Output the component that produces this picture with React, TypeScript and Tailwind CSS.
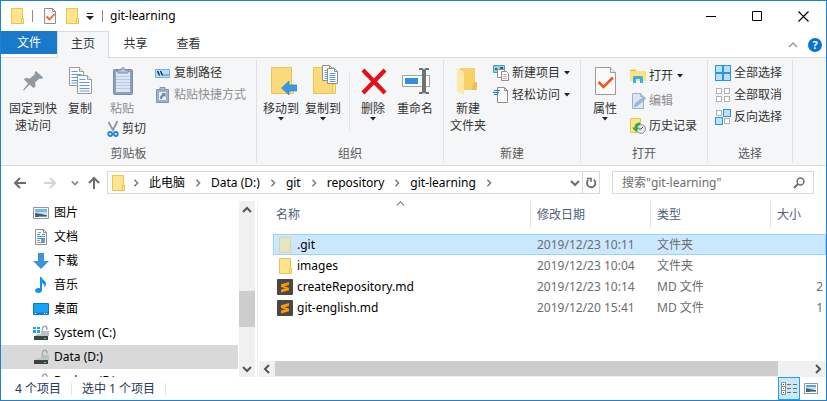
import React from "react";

type Kids = { children: React.ReactNode };

/* ---------- icons ---------- */

function Big({ children }: Kids) {
  return (
    <svg width="32" height="32" viewBox="0 0 32 32" fill="none" aria-hidden="true" className="shrink-0">
      {children}
    </svg>
  );
}

function Small({ children }: Kids) {
  return (
    <svg width="16" height="16" viewBox="0 0 16 16" fill="none" aria-hidden="true" className="shrink-0">
      {children}
    </svg>
  );
}

const FolderIcon = ({ faded = false }: { faded?: boolean }) => (
  <Small>
    <g opacity={faded ? 0.5 : 1}>
      <path d="M2.5.5h11v10h1v5h-12z" fill="#ffe48f" stroke="#e9c44f" />
      <path d="M12.5 15.5v-5h2v5z" fill="#ffe9a2" stroke="#e9c44f" />
    </g>
  </Small>
);

const SheetCheckIcon = () => (
  <Small>
    <path d="M2.5.5h8l3 3v12h-11z" fill="#f8f8f8" stroke="#8e8e8e" />
    <path d="M10.5.5v3h3" stroke="#8e8e8e" />
    <path d="M4.5 8.5l3 3 5-5.5" stroke="#f0642d" strokeWidth="1.8" />
  </Small>
);

const PinIcon = () => (
  <Big>
    <path d="M19 6l7 6.5-1.5 1.5-2-.5-4.500 4 .5 4-2 1.500-4-3.500L7 25.500l-1-.5 5-6.500-4-4 1.500-1.500 4.500.5L18 9l-.5-1.500z" fill="#8f999f" />
  </Big>
);

const Page = ({ x, y }: { x: number; y: number }) => (
  <g transform={`translate(${x} ${y})`}>
    <path d="M.5.5h10l4 4v14H.5z" fill="#fff" stroke="#9a9a9a" />
    <path d="M10.5.5v4h4" fill="#eee" stroke="#9a9a9a" />
    <path d="M2.5 4.500h6M2.5 7.500h10M2.5 10.500h10M2.5 13.500h10M2.5 16h10" stroke="#5b9bea" />
  </g>
);

const CopyIcon = () => (
  <Big>
    <Page x={5} y={2} />
    <Page x={13} y={10} />
  </Big>
);

const PasteIcon = () => (
  <Big>
    <rect x="7.5" y="4.5" width="19" height="25" rx="1" fill="#8e9fbb" stroke="#7c8fae" />
    <path d="M10 7h14v20H10z" fill="#dbe7f7" />
    <path d="M10 11.500h14M10 14.500h14M10 17.500h14M10 20.500h14M10 23.500h14" stroke="#b9cae2" />
    <path d="M12 8V5h3c0-3 4-3 4 0h3v3z" fill="#b6c2d3" stroke="#7e90ad" />
  </Big>
);

const ScissorsIcon = () => (
  <svg width="12" height="18" viewBox="0 0 12 18" fill="none" aria-hidden="true" className="shrink-0">
    <path d="M1.500 2l5 9M10.500 1l-5 10" stroke="#8b979f" strokeWidth="1.8" />
    <circle cx="3.2" cy="14" r="2" stroke="#1f86d3" strokeWidth="1.8" />
    <circle cx="8.8" cy="14" r="2" stroke="#1f86d3" strokeWidth="1.8" />
  </svg>
);

const CopyPathIcon = () => (
  <Small>
    <path d="M.5 4.500h14v8H.5z" fill="#b7def8" stroke="#6fb5e6" />
    <path d="M2.500 6l2 4.500M5.500 6l2 4.500" stroke="#123" strokeWidth="1.3" />
    <path d="M8.500 10h1M10.500 10h1M12.500 10h1" stroke="#123" />
  </Small>
);

const PasteLinkIcon = () => (
  <Small>
    <path d="M1.500 2.500h12v13h-12z" fill="#9fb0cb" stroke="#8194b4" />
    <path d="M5 3V.5h5V3z" fill="#b4c0d4" stroke="#8194b4" />
    <path d="M4 5h7v8H4z" fill="#e9eff8" />
    <path d="M5 12c0-3 1-4 2.500-4.500L6.500 6H10.500v4L9 9C8 9.500 7 10.500 7 12z" fill="#6f86b1" />
  </Small>
);

const BigFolder = () => (
  <>
    <path d="M6.500 2.500h20v17h1v9h-21z" fill="#fbda7c" stroke="#ecc452" />
    <path d="M25.500 28.500v-9h3v9z" fill="#fde59a" stroke="#ecc452" />
  </>
);

const MoveToIcon = () => (
  <Big>
    <BigFolder />
    <path d="M16.500 23l7.500-7v4h8v6h-8v4z" fill="#3a97e4" stroke="#2b80ca" strokeWidth=".6" />
  </Big>
);

const MiniPage = ({ x, y }: { x: number; y: number }) => (
  <g transform={`translate(${x} ${y})`}>
    <path d="M.5.5h7l3 3v12H.5z" fill="#fff" stroke="#8f8f8f" />
    <path d="M7.500.5v3h3" stroke="#8f8f8f" />
    <path d="M2.500 5.500h6M2.500 7.500h6M2.500 9.500h6M2.500 11.500h6M2.500 13.500h6" stroke="#5b9bea" />
  </g>
);

const CopyToIcon = () => (
  <Big>
    <BigFolder />
    <MiniPage x={15} y={0} />
    <MiniPage x={20} y={3} />
  </Big>
);

const DeleteIcon = () => (
  <Big>
    <path d="M6 5l22 23M28 5L6 28" stroke="#e60f17" strokeWidth="4.2" />
  </Big>
);

const RenameIcon = () => (
  <Big>
    <path d="M3.500 10.500h27v11h-27z" fill="#fdfdfd" stroke="#9da3a8" />
    <path d="M6 13h13v6H6z" fill="#2f8fe3" />
    <path d="M23 6h4v21h-4z" fill="#6c7278" />
    <path d="M20 4h3l2 2 2-2h3M20 28h3l2-2 2 2h3" stroke="#6c7278" strokeWidth="2.200" />
  </Big>
);

const NewFolderIcon = () => (
  <Big>
    <path d="M8 3h15v14l2 2v6H8z" fill="#f7d06a" />
    <path d="M5 3l7 4v23l-7-4z" fill="#ffe9a6" />
    <path d="M22 17h3v8h-6z" fill="#efbf53" />
  </Big>
);

const NewItemIcon = () => (
  <Small>
    <path d="M.5.5h11v7H.5z" fill="#8ed0ef" stroke="#4c9bc4" />
    <path d="M2 3h2v2H2zM7 2h3v3H7z" fill="#32607b" />
    <path d="M4.500 4.500h7v8h-7z" fill="#fff" stroke="#8f8f8f" />
    <path d="M8.500 6.500h5l2 2v7h-7z" fill="#fff" stroke="#8f8f8f" />
    <path d="M10 9.500h4M10 11.500h4M10 13.500h4" stroke="#e8a79c" />
  </Small>
);

const EasyAccessIcon = () => (
  <Small>
    <path d="M4.500.5h7l3 3v12h-10z" fill="#fafafa" stroke="#8f8f8f" />
    <path d="M11.500.5v3h3" stroke="#8f8f8f" />
    <path d="M1 3.500h6M0 5.500h6M1 7.500h4" stroke="#2474b8" />
  </Small>
);

const PropertiesIcon = () => (
  <Big>
    <path d="M6.500 2.500h15l5 5v22h-20z" fill="#fafafa" stroke="#9a9a9a" />
    <path d="M21.500 2.500v5h5" fill="#eee" stroke="#9a9a9a" />
    <path d="M9.500 17l5 5 9.500-9.500" stroke="#f0591c" strokeWidth="2.600" />
  </Big>
);

const OpenIcon = () => (
  <Small>
    <path d="M0 1h6l1 2h9v10H0z" fill="#ffdf85" />
    <path d="M1 2h4v1H1z" fill="#e3b23c" />
    <path d="M3 15V9l1-1h8l1 1v6h-3v-4H6v4z" fill="#35b0ea" />
  </Small>
);

const EditIcon = () => (
  <Small>
    <path d="M2.500.5h8l3 3v12h-11z" fill="#dbe6f5" stroke="#9dafcb" />
    <path d="M10.500.5v3h3" stroke="#9dafcb" />
    <path d="M4.500 13.500l1-3L14 4l1.500 1.500-8 7z" fill="#a3b8d6" stroke="#849ec5" strokeWidth=".7" />
  </Small>
);

const HistoryIcon = () => (
  <Small>
    <path d="M.5.5h10v14H.5z" fill="#ffe48f" stroke="#e9c44f" />
    <circle cx="11" cy="11" r="4.500" fill="#e3e7e9" stroke="#8b9296" />
    <path d="M13 9l-2 2H9" stroke="#555" />
    <path d="M10 4.500C6 4.500 4.500 7 4.500 9.500H2L6 14l3.500-4.500H7.300C7.300 8 8.500 7 10 7z" fill="#2fae45" />
  </Small>
);

const Cell = ({ x, y, on }: { x: number; y: number; on: boolean }) => (
  <rect
    x={on ? x + 0.5 : x + 1.5}
    y={on ? y + 0.5 : y + 1.5}
    width={on ? 7 : 5}
    height={on ? 7 : 5}
    fill={on ? "#b9e1fb" : "#fdfdfd"}
    stroke={on ? "#2f92dc" : "#b1b1b1"}
  />
);

const GridIcon = ({ on }: { on: boolean[] }) => (
  <Small>
    <Cell x={0} y={0} on={on[0]} />
    <Cell x={8} y={0} on={on[1]} />
    <Cell x={0} y={8} on={on[2]} />
    <Cell x={8} y={8} on={on[3]} />
  </Small>
);

const PicturesIcon = () => (
  <Small>
    <path d="M.5 2.500h15v11H.5z" fill="#fff" stroke="#8f979c" />
    <path d="M2 4h12v4H2z" fill="#79b4f2" />
    <path d="M2 7h12v2H2z" fill="#c7e0f5" />
    <path d="M2 8l4 .5L14 10v2H2z" fill="#3d6b62" />
    <path d="M6 11h8v1H6z" fill="#6c9bb8" />
  </Small>
);

const ThumbnailsIcon = () => (
  <svg width="14" height="11" viewBox="0 0 14 11" fill="none" aria-hidden="true">
    <path d="M.5.5h13v10H.5z" fill="#fff" stroke="#8f979c" />
    <path d="M2 2h10v3H2z" fill="#5f9fee" />
    <path d="M2 4h10v2H2z" fill="#c7e0f5" />
    <path d="M2 5l4 1 6 1v2H2z" fill="#3d6b62" />
    <path d="M6 8h6v1H6z" fill="#6c9bb8" />
  </svg>
);

const DocumentsIcon = () => (
  <Small>
    <path d="M2.500.5h8l3 3v12h-11z" fill="#fff" stroke="#8e8e8e" />
    <path d="M10.500.5v3h3" stroke="#8e8e8e" />
    <path d="M4 5.500h3M4 7.500h8M4 9.500h8M9 5.500h3" stroke="#3a93d4" />
    <path d="M4 11.500h3M4 13.500h8M5 3.500h3" stroke="#8e9aa2" />
    <path d="M8 10h4v3H8z" fill="#6f9bb0" />
  </Small>
);

const DownloadsIcon = () => (
  <Small>
    <path d="M5 0h6v8h5l-8 8-8-8h5z" fill="#3a93e0" />
  </Small>
);

const MusicIcon = () => (
  <Small>
    <path d="M7 0h1.500c.3 3 4.500 3.500 4.500 7 0 1.500-.7 2.500-1.500 3.500.3-2.500-.5-3.500-2.500-4.500V13c0 1.800-1.500 3-3.500 3S2 15 2 13.500 3.500 11 5.500 11c.6 0 1 .1 1.500.3z" fill="#1093e8" />
  </Small>
);

const DesktopIcon = () => (
  <Small>
    <path d="M.5 2.500h15v11H.5z" fill="#18a2f7" stroke="#1476b8" />
    <path d="M1 11.500h14v2H1z" fill="#1280cf" />
    <path d="M2 12.500h1M11 12.500h1M13 12.500h1" stroke="#fff" />
  </Small>
);

const DriveIcon = ({ system = false }: { system?: boolean }) => (
  <Small>
    {system && <path d="M0 2h3v2H0zM4 2h3v2H4zM0 5h3v3H0zM4 5h3v3H4z" fill="#18a8ec" />}
    <path d="M9.500 6V3.500c0-3 4.500-3 4.500 0V5" stroke="#a3a9ad" strokeWidth="1.400" />
    <path d="M8 6h8v5H8z" fill="#b8bec2" />
    <path d="M4 9h4l7 1 1 1H2z" fill="#c1c5c8" />
    <path d="M1 11h14v4H1z" fill="#3d4245" />
    <path d="M11 13h2v1h-2z" fill="#37e05a" />
  </Small>
);

const SublimeIcon = () => (
  <Small>
    <rect width="16" height="16" rx="1" fill="#484848" />
    <path d="M4 5.300L12 3v3L7.500 7.300 12 8.700v2.500L4 13.500v-3l4.500-1.200L4 8z" fill="#ff9800" />
  </Small>
);

const DetailsIcon = () => (
  <Small>
    <path d="M.5 1.500h4v12h-4zM.5 5.500h4M.5 9.500h4" fill="#fff" stroke="#8c8c8c" />
    <path d="M2 3h1v1H2z" fill="#3b7a50" />
    <path d="M2 7h1v1H2z" fill="#2c7de0" />
    <path d="M2 11h1v1H2z" fill="#e02020" />
    <path d="M6 3.500h4M12 3.500h4M6 7.500h4M12 7.500h4M6 11.500h4M12 11.500h4" stroke="#6d6d6d" />
  </Small>
);

type Dir = "up" | "down" | "left" | "right";
const chevronPaths: Record<Dir, string> = {
  up: "M1 7l4-4 4 4",
  down: "M1 3l4 4 4-4",
  left: "M7 1L3 5l4 4",
  right: "M3 1l4 4-4 4",
};

function Chevron({ dir, size = 10, color = "#555", weight = 2 }: { dir: Dir; size?: number; color?: string; weight?: number }) {
  return (
    <svg width={size} height={size} viewBox="0 0 10 10" fill="none" aria-hidden="true" className="shrink-0">
      <path d={chevronPaths[dir]} stroke={color} strokeWidth={weight} />
    </svg>
  );
}

const Caret = () => (
  <svg width="6" height="4" viewBox="0 0 6 4" aria-hidden="true" className="shrink-0">
    <path d="M0 0h6L3 3.500z" fill="#222" />
  </svg>
);

function Arrow({ kind, color }: { kind: "left" | "right" | "up"; color: string }) {
  const d = {
    left: "M13 7H2.500M7 2L2 7l5 5",
    right: "M1 7h10.500M7 2l5 5-5 5",
    up: "M7 13V2.500M2 7l5-5 5 5",
  }[kind];
  return (
    <svg width="14" height="14" viewBox="0 0 14 14" fill="none" aria-hidden="true">
      <path d={d} stroke={color} strokeWidth="2" />
    </svg>
  );
}

/* ---------- ribbon ---------- */

function Group({ label, className, children }: { label: string; className: string } & Kids) {
  return (
    <section aria-label={label} className={`flex shrink-0 flex-col ${className}`}>
      <div className="flex h-[88px]">{children}</div>
      <div className="text-center leading-4 text-[#5a5a5a]">{label}</div>
    </section>
  );
}

const Divider = () => <div className="my-[2px] w-px shrink-0 bg-[#dfe1e3]" />;

function BigButton({ icon, lines, caret, className = "w-[42px]", disabled }: { icon: React.ReactNode; lines: string[]; caret?: boolean; className?: string; disabled?: boolean }) {
  return (
    <button disabled={disabled} className={`flex shrink-0 flex-col items-center pt-[7px] disabled:text-[#8d8d8d] ${className}`}>
      {icon}
      <span className="mt-[3px] flex flex-col items-center whitespace-nowrap leading-[17px]">
        {lines.map((l) => (
          <span key={l}>{l}</span>
        ))}
      </span>
      {caret && <Caret />}
    </button>
  );
}

function SmallButton({ icon, label, caret, disabled, className = "h-[22px]" }: { icon: React.ReactNode; label: string; caret?: boolean; disabled?: boolean; className?: string }) {
  return (
    <button disabled={disabled} className={`flex items-center gap-[3px] whitespace-nowrap disabled:text-[#8d8d8d] ${className}`}>
      {icon}
      <span>{label}</span>
      {caret && (
        <span className="pl-px">
          <Caret />
        </span>
      )}
    </button>
  );
}

function Ribbon() {
  return (
    <div className="flex h-[109px] shrink-0 overflow-hidden border-y border-[#dadbdc] bg-[#f5f6f7] text-[#333]">
      <Group label="剪贴板" className="w-[255px]">
        <BigButton icon={<PinIcon />} lines={["固定到快", "速访问"]} className="ml-2 w-[48px]" />
        <BigButton icon={<CopyIcon />} lines={["复制"]} className="w-[46px]" />
        <div className="ml-1 flex w-[42px] flex-col items-start">
          <BigButton icon={<PasteIcon />} lines={["粘贴"]} className="w-[30px]" disabled />
          <SmallButton icon={<ScissorsIcon />} label="剪切" className="h-6" />
        </div>
        <div className="ml-[6px] pt-1">
          <SmallButton icon={<CopyPathIcon />} label="复制路径" />
          <SmallButton icon={<PasteLinkIcon />} label="粘贴快捷方式" disabled />
        </div>
      </Group>
      <Divider />
      <Group label="组织" className="w-[186px]">
        <div className="flex pl-[3px]">
          <BigButton icon={<MoveToIcon />} lines={["移动到"]} caret />
          <BigButton icon={<CopyToIcon />} lines={["复制到"]} caret />
          <div className="mt-[15px] mr-[2px] mb-4 ml-[5px] w-px bg-[#dfe1e3]" />
          <BigButton icon={<DeleteIcon />} lines={["删除"]} caret />
          <BigButton icon={<RenameIcon />} lines={["重命名"]} />
        </div>
      </Group>
      <Divider />
      <Group label="新建" className="w-[136px]">
        <div className="flex pl-[3px]">
          <BigButton icon={<NewFolderIcon />} lines={["新建", "文件夹"]} />
          <div className="ml-1 pt-1">
            <SmallButton icon={<NewItemIcon />} label="新建项目" caret />
            <SmallButton icon={<EasyAccessIcon />} label="轻松访问" caret />
          </div>
        </div>
      </Group>
      <Divider />
      <Group label="打开" className="w-[126px]">
        <div className="flex pl-[3px]">
          <BigButton icon={<PropertiesIcon />} lines={["属性"]} caret />
          <div className="ml-1 pt-[5px]">
            <SmallButton icon={<OpenIcon />} label="打开" caret className="h-[25px]" />
            <SmallButton icon={<EditIcon />} label="编辑" disabled className="h-[25px]" />
            <SmallButton icon={<HistoryIcon />} label="历史记录" className="h-[25px]" />
          </div>
        </div>
      </Group>
      <Divider />
      <Group label="选择" className="w-[84px]">
        <div className="pt-1 pl-[7px]">
          <SmallButton icon={<GridIcon on={[true, true, true, true]} />} label="全部选择" />
          <SmallButton icon={<GridIcon on={[false, false, false, false]} />} label="全部取消" />
          <SmallButton icon={<GridIcon on={[false, true, true, false]} />} label="反向选择" />
        </div>
      </Group>
      <Divider />
    </div>
  );
}

/* ---------- title bar and tabs ---------- */

function TitleBar() {
  return (
    <header className="flex h-[30px] shrink-0 items-center pl-[8px]">
      <FolderIcon />
      <span className="ml-[7px] h-3 w-px bg-[#8c8c8c]" />
      <div className="ml-[9px] flex items-center gap-[6px]">
        <button aria-label="属性">
          <SheetCheckIcon />
        </button>
        <button aria-label="新建文件夹">
          <FolderIcon />
        </button>
        <button aria-label="自定义快速访问工具栏">
          <svg width="8" height="8" viewBox="0 0 8 8" aria-hidden="true">
            <path d="M1 1.500h6" stroke="#222" />
            <path d="M0 4h8L4 8z" fill="#222" />
          </svg>
        </button>
      </div>
      <span className="ml-[8px] h-3 w-px bg-[#8c8c8c]" />
      <h1 className="ml-[7px] flex-1 text-[12px] text-black">git-learning</h1>
      <button aria-label="最小化" className="flex h-full w-[46px] items-center justify-center">
        <svg width="11" height="11" viewBox="0 0 11 11">
          <path d="M0 5.500h10" stroke="#000" />
        </svg>
      </button>
      <button aria-label="最大化" className="flex h-full w-[46px] items-center justify-center">
        <svg width="11" height="11" viewBox="0 0 11 11">
          <path d="M.5.5h9v9h-9z" fill="none" stroke="#000" />
        </svg>
      </button>
      <button aria-label="关闭" className="flex h-full w-[46px] items-center justify-center">
        <svg width="11" height="11" viewBox="0 0 11 11">
          <path d="M.5.5l10 10M10.500.5l-10 10" stroke="#000" strokeWidth="1.200" />
        </svg>
      </button>
    </header>
  );
}

function Tabs() {
  return (
    <div className="relative z-10 -mb-px flex h-[27px] shrink-0 text-[#333]">
      <button className="h-[23px] w-[56px] bg-[#1979ca] text-white">文件</button>
      <button className="w-[52px] border border-b-0 border-[#dadbdc] bg-[#f5f6f7] pb-[2px]">主页</button>
      <button className="w-[53px] pb-[2px]">共享</button>
      <button className="w-[53px] pb-[2px]">查看</button>
      <div className="ml-auto flex items-center gap-[10px] pr-1">
        <button aria-label="折叠功能区">
          <Chevron dir="up" color="#9a9a9a" weight={1.5} />
        </button>
        <button aria-label="帮助" className="flex size-[14px] items-center justify-center rounded-full bg-[#0b73d0] text-[11px] font-bold text-white">
          ?
        </button>
      </div>
    </div>
  );
}

/* ---------- address row ---------- */

const crumbs = ["此电脑", "Data (D:)", "git", "repository", "git-learning"];

function AddressRow() {
  return (
    <div className="flex h-[35px] shrink-0 items-start pt-[5px] pr-[12px] pl-[12px]">
      <nav aria-label="导航" className="flex h-[23px] w-[94px] shrink-0 items-center">
        <button aria-label="后退">
          <Arrow kind="left" color="#6d6d6d" />
        </button>
        <button aria-label="前进" className="ml-4">
          <Arrow kind="right" color="#d4d4d4" />
        </button>
        <button aria-label="最近浏览的位置" className="ml-[14px]">
          <Chevron dir="down" size={8} color="#8a8a8a" />
        </button>
        <button aria-label="上移" className="ml-[8px]">
          <Arrow kind="up" color="#6d6d6d" />
        </button>
      </nav>
      <div className="flex h-[23px] min-w-0 flex-1 items-center border border-[#d9d9d9] pl-[2px]">
        <FolderIcon />
        <div className="flex min-w-0 flex-1 items-center overflow-hidden pl-[6px] whitespace-nowrap text-black">
          <Chevron dir="right" size={8} color="#777" weight={1.8} />
          {crumbs.map((c) => (
            <React.Fragment key={c}>
              <button className="ml-[9px]">{c}</button>
              <span className="ml-[9px] flex">
                <Chevron dir="right" size={8} color="#777" weight={1.8} />
              </span>
            </React.Fragment>
          ))}
        </div>
        <button aria-label="以前的位置" className="mr-[2px]">
          <Chevron dir="down" color="#6d6d6d" />
        </button>
        <button aria-label="刷新" className="flex h-full w-[17px] items-center justify-center border-l border-[#d9d9d9]">
          <svg width="12" height="12" viewBox="0 0 12 12" fill="none" aria-hidden="true">
            <path d="M8.800 2.800A4.200 4.200 0 1 1 3.300 3" stroke="#6d6d6d" strokeWidth="1.800" />
            <path d="M2 1.500h4V5" stroke="#6d6d6d" strokeWidth="1.600" />
          </svg>
        </button>
      </div>
      <div className="ml-3 flex h-[23px] w-[202px] shrink-0 items-center border border-[#d9d9d9] pr-2 pl-[9px]">
        <input aria-label="搜索" placeholder={'搜索"git-learning"'} className="min-w-0 flex-1 outline-none placeholder:text-[#6d6d6d]" />
        <svg width="12" height="12" viewBox="0 0 12 12" fill="none" aria-hidden="true">
          <circle cx="7.500" cy="4.500" r="3.400" stroke="#6d6d6d" strokeWidth="1.500" />
          <path d="M5 7L1 11" stroke="#6d6d6d" strokeWidth="2" />
        </svg>
      </div>
    </div>
  );
}

/* ---------- navigation pane ---------- */

const places = [
  { label: "图片", icon: <PicturesIcon /> },
  { label: "文档", icon: <DocumentsIcon /> },
  { label: "下载", icon: <DownloadsIcon /> },
  { label: "音乐", icon: <MusicIcon /> },
  { label: "桌面", icon: <DesktopIcon /> },
  { label: "System (C:)", icon: <DriveIcon system /> },
  { label: "Data (D:)", icon: <DriveIcon />, selected: true },
  { label: "Backup (E:)", icon: <DriveIcon /> },
];

function NavPane() {
  return (
    <aside className="flex w-[257px] shrink-0 border-r border-[#f0f0f0]">
      <ul className="min-w-0 flex-1 overflow-hidden text-black">
        {places.map((p) => (
          <li key={p.label}>
            <button className={`flex h-6 w-full items-center gap-[5px] pl-8 ${p.selected ? "bg-[#d9d9d9]" : ""}`}>
              {p.icon}
              {p.label}
            </button>
          </li>
        ))}
      </ul>
      <div className="mr-[2px] ml-px flex w-4 shrink-0 flex-col items-center bg-[#f0f0f0]">
        <button aria-label="向上滚动" className="flex h-[17px] items-center">
          <Chevron dir="up" />
        </button>
        <div className="flex-[73]" />
        <div className="h-9 w-full bg-[#cdcdcd]" />
        <div className="flex-[33]" />
        <button aria-label="向下滚动" className="flex h-[17px] items-center">
          <Chevron dir="down" />
        </button>
      </div>
    </aside>
  );
}

/* ---------- file list ---------- */

const files = [
  { name: ".git", date: "2019/12/23 10:11", type: "文件夹", size: "", icon: <FolderIcon faded />, selected: true },
  { name: "images", date: "2019/12/23 10:04", type: "文件夹", size: "", icon: <FolderIcon /> },
  { name: "createRepository.md", date: "2019/12/23 10:14", type: "MD 文件", size: "2", icon: <SublimeIcon /> },
  { name: "git-english.md", date: "2019/12/20 15:41", type: "MD 文件", size: "1", icon: <SublimeIcon /> },
];

function HeadCell({ children, className }: { className: string } & Kids) {
  return (
    <th className="h-[33px] p-0 text-left align-top font-normal">
      <div className={`flex h-[27px] items-center border-[#e5e5e5] ${className}`}>{children}</div>
    </th>
  );
}

function FileList() {
  return (
    <main className="flex min-w-0 flex-1 flex-col">
      <div className="relative min-h-0 flex-1 overflow-hidden pl-[15px]">
        <span className="absolute -top-[2px] left-[138px]">
          <Chevron dir="up" size={9} color="#777" weight={1.2} />
        </span>
        <table className="w-full table-fixed border-collapse whitespace-nowrap">
          <colgroup>
            <col />
            <col className="w-[120px]" />
            <col className="w-[120px]" />
            <col className="w-[55px]" />
          </colgroup>
          <thead className="text-[#4c607a]">
            <tr>
              <HeadCell className="border-r pl-[3px]">名称</HeadCell>
              <HeadCell className="border-r pl-[6px]">修改日期</HeadCell>
              <HeadCell className="border-r pl-[6px]">类型</HeadCell>
              <HeadCell className="pl-[6px]">大小</HeadCell>
            </tr>
          </thead>
          <tbody className="text-[#6d6d6d]">
            {files.map((f) => (
              <tr key={f.name} className={f.selected ? "bg-[#cce8ff] outline outline-1 -outline-offset-1 outline-[#99d1ff]" : ""}>
                <td className="h-[21px] p-0 pl-1">
                  <span className="flex items-center gap-1 text-black">
                    {f.icon}
                    {f.name}
                  </span>
                </td>
                <td className="p-0 pl-[6px]">{f.date}</td>
                <td className="p-0 pl-[6px]">{f.type}</td>
                <td className="p-0 pr-[3px] text-right">{f.size}</td>
              </tr>
            ))}
          </tbody>
        </table>
      </div>
      <div className="ml-px flex h-4 shrink-0 items-stretch bg-[#f0f0f0]">
        <button aria-label="向左滚动" className="flex w-4 items-center justify-center">
          <Chevron dir="left" />
        </button>
        <div className="mb-px flex-1 bg-[#cdcdcd]" />
        <div className="w-8" />
        <button aria-label="向右滚动" className="flex w-4 items-center justify-center">
          <Chevron dir="right" />
        </button>
      </div>
    </main>
  );
}

function StatusBar() {
  return (
    <footer className="flex h-[23px] shrink-0 items-center pl-[14px] text-[#1e395b]">
      <span>4 个项目</span>
      <span className="mx-[10px] h-3 w-px bg-[#e5e5e5]" />
      <span>选中 1 个项目</span>
      <span className="mx-[10px] h-3 w-px bg-[#e5e5e5]" />
      <div className="ml-auto flex h-full items-center pr-1">
        <button aria-label="详细信息" aria-pressed="true" className="flex h-full w-[22px] items-center justify-center border border-[#26a0da] bg-[#cbe8f6]">
          <DetailsIcon />
        </button>
        <button aria-label="大图标" className="flex h-full w-[22px] items-center justify-center">
          <ThumbnailsIcon />
        </button>
      </div>
    </footer>
  );
}

export default function App() {
  return (
    <div className="flex h-screen flex-col overflow-hidden border border-[#1883d7] bg-white font-['Noto_Sans','Noto_Sans_CJK_SC',sans-serif] text-[12px] leading-4">
      <TitleBar />
      <Tabs />
      <Ribbon />
      <AddressRow />
      <div className="flex min-h-0 flex-1">
        <NavPane />
        <FileList />
      </div>
      <StatusBar />
    </div>
  );
}
